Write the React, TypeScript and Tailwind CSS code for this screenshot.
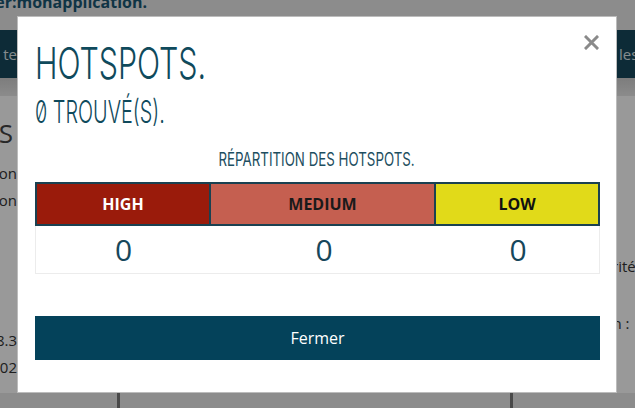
import React from "react";

const titleFont = { fontFamily: 'Inter, "Liberation Sans Narrow", sans-serif' };

export default function App() {
  return (
    <div className="relative w-[635px] h-[408px] overflow-hidden bg-[#e9e9e9] font-['Open_Sans',sans-serif]">
      {/* Background page */}
      <div className="flex flex-col h-full">
        <div className="h-[30px] overflow-hidden">
          <div className="w-[147px] overflow-hidden flex justify-end -mt-[10px]">
            <span className="whitespace-nowrap text-[16px] font-bold text-[#1a5874]">Connecté en tant que user:monapplication.</span>
          </div>
        </div>
        <div className="h-[48px] bg-[#17485d] flex items-center justify-between text-[15px] text-[#dfe8ec]">
          <div className="w-[17px] overflow-hidden flex justify-end"><span className="whitespace-nowrap">Accueil te</span></div>
          <div className="w-[18px] overflow-hidden flex justify-start"><span className="whitespace-nowrap pl-[2px]">les règles</span></div>
        </div>
        <div className="h-[18px] bg-gradient-to-b from-[#d0d0d0] to-[#e9e9e9]" />
        <div className="flex flex-1 justify-between">
          <div className="w-[17px] bg-white overflow-hidden flex flex-col items-end text-[#333]">
            <span className="whitespace-nowrap text-[26px] leading-[30px] mt-[22px] mr-[4px] text-[#444]">HOTSPOTS</span>
            <span className="whitespace-nowrap text-[15px] leading-[27px] mt-[12px]">Application</span>
            <span className="whitespace-nowrap text-[15px] leading-[27px]">Version</span>
            <span className="whitespace-nowrap text-[15px] leading-[27px] mt-[113px]">8.3</span>
            <span className="whitespace-nowrap text-[15px] leading-[27px]">01/02</span>
          </div>
          <div className="w-[18px] bg-white overflow-hidden flex flex-col items-start text-[#333]">
            <span className="whitespace-nowrap text-[15px] leading-[27px] mt-[157px] -ml-[38px]">Sécurité</span>
            <span className="whitespace-nowrap text-[15px] leading-[27px] mt-[30px] -ml-[48px]">Version :</span>
          </div>
        </div>
        <div className="h-[15px] flex">
          <div className="w-[117px]" />
          <div className="w-[3px] bg-[#7a7a7a]" />
          <div className="w-[390px]" />
          <div className="w-[3px] bg-[#7a7a7a]" />
          <div className="flex-1" />
        </div>
      </div>

      {/* Overlay */}
      <div className="absolute inset-0 bg-[rgba(0,0,0,0.4)]" />

      {/* Modal */}
      <div className="absolute left-[17px] top-[16px] w-[600px] h-[377px] bg-white border border-[#bcbcbc] px-[17px] pt-[20px]">
        <button className="absolute right-[17px] top-[17px] w-[16px] h-[16px] flex items-center justify-center">
          <svg width="15" height="15" viewBox="0 0 15 15">
            <path d="M2 2 L13 13 M13 2 L2 13" stroke="#8a8a8a" strokeWidth="3" strokeLinecap="square" />
          </svg>
        </button>
        <div className="text-[#0f4a5c] slashed-zero" style={titleFont}>
          <div className="h-[48px] flex items-end">
            <span className="inline-block origin-left scale-x-[0.69] text-[44px] leading-[44px] font-light">HOTSPOTS.</span>
          </div>
          <div className="h-[42px] flex items-end">
            <span className="inline-block origin-left scale-x-[0.64] text-[31px] leading-[31px] font-light">0 TROUVÉ(S).</span>
          </div>
        </div>
        <div className="mt-[23px] flex justify-center text-[#1d4e60]" style={titleFont}>
          <span className="inline-block scale-x-[0.74] text-[18px] leading-[20px] font-normal">RÉPARTITION DES HOTSPOTS.</span>
        </div>
        <div className="mt-[12px] w-[565px]">
          <div className="flex h-[44px] border-2 border-[#1a4151] text-[16px] font-bold">
            <div className="w-[174px] bg-[#9a1b0b] text-white flex items-center justify-center border-r-2 border-[#1a4151]">HIGH</div>
            <div className="w-[225px] bg-[#c55f50] text-[#1a1a1a] flex items-center justify-center border-r-2 border-[#1a4151]">MEDIUM</div>
            <div className="flex-1 bg-[#e1da19] text-[#111] flex items-center justify-center">LOW</div>
          </div>
          <div className="flex h-[48px] border border-t-0 border-[#ececec] text-[30px] text-[#16475b]">
            <div className="w-[175px] flex items-center justify-center">0</div>
            <div className="w-[226px] flex items-center justify-center">0</div>
            <div className="flex-1 flex items-center justify-center">0</div>
          </div>
        </div>
        <button className="mt-[42px] w-[565px] h-[44px] bg-[#04425a] text-white text-[16px] flex items-center justify-center">Fermer</button>
      </div>
    </div>
  );
}
